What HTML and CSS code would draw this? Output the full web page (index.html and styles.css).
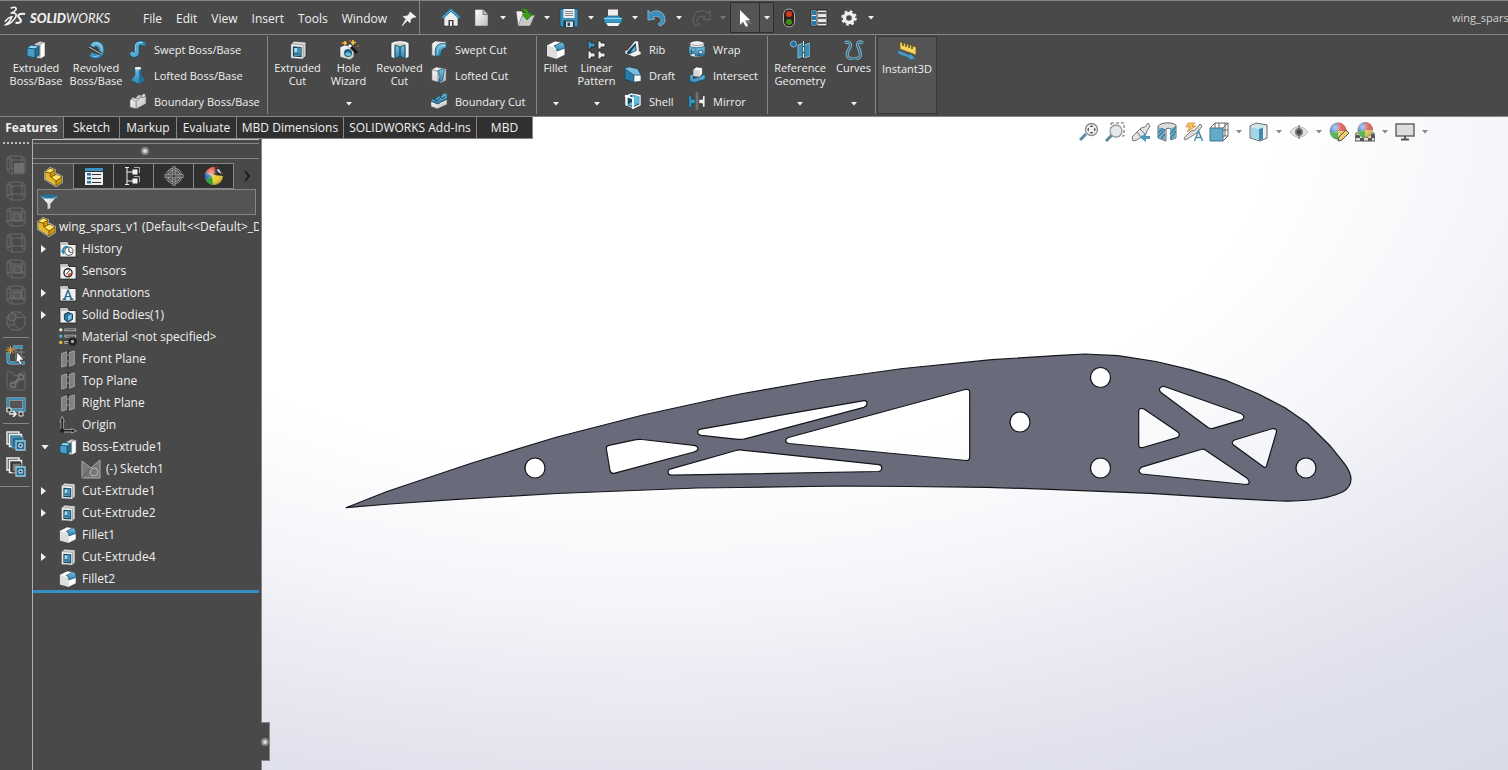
FILE: index.html
```html
<!DOCTYPE html>
<html lang="en">
<head>
<meta charset="utf-8">
<title>SOLIDWORKS</title>
<link rel="stylesheet" href="styles.css">
</head>
<body>
<svg class="sprite" aria-hidden="true">
  <defs>
    <linearGradient id="blue" x1="0" y1="0" x2="0" y2="1"><stop offset="0" stop-color="#7cc1e0"/><stop offset="1" stop-color="#2b80ac"/></linearGradient>
    <linearGradient id="grey" x1="0" y1="0" x2="1" y2="1"><stop offset="0" stop-color="#fff"/><stop offset="1" stop-color="#bdbdbd"/></linearGradient>
    <radialGradient id="shine" cx=".35" cy=".3" r=".8"><stop offset="0" stop-color="#fff" stop-opacity=".6"/><stop offset=".5" stop-color="#fff" stop-opacity="0"/><stop offset="1" stop-color="#000" stop-opacity=".35"/></radialGradient>
  </defs>
  <symbol id="caret" viewBox="0 0 6 4"><path d="M0 0h6L3 3.5z" fill="currentColor"/></symbol>
  <symbol id="extrude" viewBox="0 0 20 20"><path d="M8 4l6-3 5 1v14l-5 3-4-1z" fill="#cfcfcf" stroke="#333" stroke-width=".7"/><path d="M14 4l5-2v14l-5 3z" fill="#fff" stroke="#555" stroke-width=".6"/><path d="M1 8l4-3 8 1-4 3z" fill="#9ad6ee"/><path d="M1 8l8 1v9l-8-2z" fill="#4a9fc6"/><path d="M9 9l4-3v9l-4 3z" fill="#256f96"/><path d="M1 8l4-3 8 1v9l-4 3-8-2zM1 8l8 1v9M9 9l4-3" fill="none" stroke="#164c68" stroke-width=".9"/></symbol>
  <symbol id="revolve" viewBox="0 0 20 20"><path d="M4 5C8-1 18 1 18 10c0 9-9 11-15 6l3-4c4 3 7 1 7-2 0-4-4-5-6-2z" fill="url(#blue)" stroke="#1b617f" stroke-width=".8"/><path d="M7 3c7-1 9 3 9 7s-4 8-10 6" fill="none" stroke="#9bdcf3" stroke-width=".8"/><path d="M3 7l12 7" stroke="#302d2b" stroke-width="3.400"/><path d="M3 7l12 7" stroke="#aaa" stroke-width="1.400"/></symbol>
  <symbol id="sweep" viewBox="0 0 20 20"><path d="M2 14c3 5 7 3 7-1V7c0-4 5-5 8-2" fill="none" stroke="#164f70" stroke-width="5.500"/><path d="M2 14c3 5 7 3 7-1V7c0-4 5-5 8-2" fill="none" stroke="#4fa9d1" stroke-width="3.800"/><path d="M3 13c2 3 4 2 4-1V7c0-4 4-5 8-4" fill="none" stroke="#a5e0f5"/><ellipse cx="17" cy="4.500" rx="1.500" ry="2.500" fill="#2b7da8"/></symbol>
  <symbol id="loft" viewBox="0 0 20 20"><path d="M6.500 2h7v8l4.500 6-8 4-8-4 4.500-6z" fill="url(#blue)" stroke="#164c68" stroke-width=".8"/><path d="M11 3v17l7-4-4.500-6V3z" fill="#236f98"/><ellipse cx="10" cy="2.500" rx="3.500" ry="1.500" fill="#fff"/></symbol>
  <symbol id="boundary" viewBox="0 0 20 20"><path d="M1 9l3-3 3 1 4-4 3 1 3-3 2 4v8L8 19l-7-2z" fill="url(#grey)" stroke="#444" stroke-width=".7"/><path d="M1 9c3-3 4 2 7 1 4 0 3-6 6-4 3 1 3-2 5-1M8 11v8M4 6c4 0 3 3 6 1 3-1 2-4 5-2" fill="none" stroke="#777"/></symbol>
  <symbol id="cut" viewBox="0 0 20 20"><path d="M3 4l3-3 12 1v14l-3 3-12-1z" fill="#d2d2d2" stroke="#333" stroke-width=".8"/><path d="M3 4l12 1v14L3 18z" fill="#fafafa" stroke="#777" stroke-width=".6"/><path d="M5.500 7l7.500.5v9L5.500 16z" fill="#a9dcee" stroke="#1d455a" stroke-width="1.300"/><path d="M9 7.500l3.500.2v5L9 12z" fill="#3d93bb"/><path d="M6 12.500l3-.5 3.500 1v2.500L6 15z" fill="#347c9e"/></symbol>
  <symbol id="wizard" viewBox="0 0 20 20"><path d="M1 7l5-2 9 2v10l-4 3-10-3z" fill="url(#grey)" stroke="#444" stroke-width=".7"/><circle cx="9" cy="13" r="4" fill="#25657f"/><path d="M6 14a4 4 0 006 1c0-3-4-4-6-1" fill="#70c0df"/><path d="M10 5l8 8" stroke="#171717" stroke-width="3"/><path d="M10 5l2 2" stroke="#fff" stroke-width="3"/><path d="M6 1v4M4 3h4M14 0v5M12 2.500h5" stroke="#ffc83d" stroke-width="1.500"/><path d="M2 3h2M10 1h2M18 6h2" stroke="#e4572e" stroke-width="1.500"/></symbol>
  <symbol id="revcut" viewBox="0 0 20 20"><path d="M1 3c4-3 14-3 18 0v14l-4 2V7l-5 2-5-2v12l-4-2z" fill="#f2f2f2" stroke="#333" stroke-width=".7"/><path d="M4 4.500c3-2 9-2 12 0l-2 3H6z" fill="#cfcfcf"/><path d="M5 5l5 2v9l-5 3zM15 5l-5 2v9l5 3z" fill="url(#blue)" stroke="#164c68" stroke-width=".9"/></symbol>
  <symbol id="sweptcut" viewBox="0 0 20 20"><path d="M2 4l4-3 12 1v3L8 8v11l-6-2z" fill="url(#grey)" stroke="#444" stroke-width=".7"/><path d="M6 18V10C7 5 12 3 18 4v5c-4 0-6 2-6 9z" fill="url(#blue)" stroke="#164c68" stroke-width=".8"/><path d="M8 17c0-7 2-11 9-11" fill="none" stroke="#9bdcf3"/></symbol>
  <symbol id="loftcut" viewBox="0 0 20 20"><path d="M2 4l5-3 11 2v13l-6 3-10-3z" fill="url(#grey)" stroke="#444" stroke-width=".7"/><path d="M2 4l7 2v12" fill="none" stroke="#888"/><path d="M9 5l5-2 2 1-2 12-5 3 2-7z" fill="url(#blue)" stroke="#164c68" stroke-width=".8"/></symbol>
  <symbol id="boundcut" viewBox="0 0 20 20"><path d="M1 10l7 3 11-5v6L8 19l-7-3z" fill="url(#grey)" stroke="#444" stroke-width=".7"/><path d="M1 10c1-5 4 0 6-3 3-5 5 0 7-4 1-2 3-1 5-1v6c-3-1-3 2-5 2-3 0-3 4-6 3z" fill="url(#blue)" stroke="#164c68" stroke-width=".8"/><path d="M4 8l4 2 3-4 4 1 2-3" stroke="#153f55" fill="none"/></symbol>
  <symbol id="fillet" viewBox="0 0 20 20"><path d="M1 5l8-4 6 1 4 5v8l-8 4-10-3z" fill="#fff" stroke="#333" stroke-width=".7"/><path d="M1 5l7 3c3 1 3 3 3 5v6L1 16z" fill="#dedede"/><path d="M8 6l8-4c2 1 3 3 3 6l-8 3c0-2-1-4-3-5z" fill="url(#blue)" stroke="#164c68" stroke-width=".8"/></symbol>
  <symbol id="pattern" viewBox="0 0 20 20"><path d="M1 1h3v2h4v4H4v2H1z" fill="#3598c7"/><path d="M11 1h3v2h4v4h-4v2h-3zM1 11h3v2h4v4H4v2H1zM11 11h3v2h4v4h-4v2h-3z" fill="#eee"/><path d="M1 1h3v2h4v4H4v2H1zM11 1h3v2h4v4h-4v2h-3zM1 11h3v2h4v4H4v2H1zM11 11h3v2h4v4h-4v2h-3z" fill="none" stroke="#292929" stroke-width=".9"/></symbol>
  <symbol id="rib" viewBox="0 0 20 20"><path d="M12 1h4l1 11 2 2v2l-8 3L1 15v-3l3-1z" fill="#f2f2f2" stroke="#333" stroke-width=".7"/><path d="M13 3l1 9-9 4-2-2z" fill="#123d54"/><path d="M12.500 6l.5 6-6 2z" fill="#60b7d9"/></symbol>
  <symbol id="draft" viewBox="0 0 20 20"><path d="M1 2l5-1 9 2 4 7-8 1-10-5z" fill="#78c2e0"/><path d="M1 3l10 7v8L1 15z" fill="#287ba4"/><path d="M11 10h8v7l-8 1z" fill="#f4f4f4"/><path d="M1 2l5-1 9 2 4 7v7l-8 1-10-3zM1 3l10 7h8M11 10v8" fill="none" stroke="#183f54" stroke-width=".8"/></symbol>
  <symbol id="shell" viewBox="0 0 20 20"><path d="M1 4l7-3 11 2v12l-8 4-10-4z" fill="#fff" stroke="#333" stroke-width=".8"/><path d="M4 5l5-2 8 2v9l-7 3-6-2z" fill="#174c67"/><path d="M9 3v8l8 2V5zM4 14l5-3 7 2-6 3z" fill="#62b9dc"/><path d="M1 4l9 3v12" fill="none" stroke="#fff" stroke-width="2"/></symbol>
  <symbol id="wrap" viewBox="0 0 20 20"><path d="M2 3c4-3 12-3 16 0v14c-4 3-12 3-16 0z" fill="#eee" stroke="#333" stroke-width=".8"/><path d="M2 4c4 3 12 3 16 0" fill="none" stroke="#999"/><path d="M1 7c5 2 12 2 18 0v9c-2 1-4 2-7 2v-3h4v-3h-4v6H8v-3H4v-3h4v-2H4v6l-3-1z" fill="url(#blue)" stroke="#174c67" stroke-width=".7"/></symbol>
  <symbol id="intersect" viewBox="0 0 20 20"><path d="M2 10l4-1v5l7-2 6-3v6l-7 2-5 2-5-2z" fill="url(#blue)" stroke="#174c67"/><path d="M6 4l3-3 7 1v7l-3 3-7-1z" fill="#fff" stroke="#333" stroke-width=".7"/><path d="M6 4l7 1v7l-7-1z" fill="#d8d8d8"/></symbol>
  <symbol id="mirror" viewBox="0 0 20 20"><path d="M1 4h3v4h4v5H4v4H1z" fill="#3896c2" stroke="#174c67"/><path d="M19 4h-3v4h-4v5h4v4h3z" fill="#f3f3f3" stroke="#333"/><path d="M10 0v20" stroke="#bbb" stroke-width="2.500"/><path d="M10 0v20" stroke="#171717"/></symbol>
  <symbol id="refgeo" viewBox="0 0 20 20"><circle cx="3.500" cy="4" r="3" fill="#266f98" stroke="#7abbd7"/><path d="M8 5l5-2v13l-5 2zM14 5l6-2v13l-6 2z" fill="#3e8eb4" stroke="#81bdd5"/><path d="M13.500 1v18" stroke="#222" stroke-width="2"/><path d="M13.500 1v18" stroke="#d9edf5" stroke-dasharray="5 1"/></symbol>
  <symbol id="curves" viewBox="0 0 20 20"><path d="M1 3c5-3 7 2 4 6-4 7-1 10 5 10s8-3 5-10c-3-5-1-9 4-6" fill="none" stroke="#8eafbd" stroke-width="3.200"/><path d="M1 3c5-3 7 2 4 6-4 7-1 10 5 10s8-3 5-10c-3-5-1-9 4-6" fill="none" stroke="#286e91" stroke-width="1.300"/></symbol>
  <symbol id="instant" viewBox="0 0 20 20"><path d="M3 1l16 5v8L3 8z" fill="#f5d35e" stroke="#705917" stroke-width=".7"/><path d="M6 2v3M9 3v3M12 4v3M15 5v3" stroke="#302b1a" stroke-width="1.200"/><path d="M1 9l12 5v-2l6 6-8 1 1-2L1 13z" fill="#5298bf" stroke="#235879" stroke-width=".7"/></symbol>
  <symbol id="home" viewBox="0 0 20 20"><path d="M3 9l7-6 7 6v9H3z" fill="#eee" stroke="#333" stroke-width=".6"/><path d="M1 10l9-8 9 8" stroke="#297da6" stroke-width="2.600" fill="none"/><path d="M2 9l8-7 8 7" stroke="#76c3e5" stroke-width=".8" fill="none"/><path d="M7.500 18v-6h5v6" fill="#3b3b3b"/><path d="M9 18v-5h2v5" fill="#eee"/></symbol>
  <symbol id="new" viewBox="0 0 20 20"><path d="M4 1.500h8l5 5V18H4z" fill="url(#grey)" stroke="#555" stroke-width=".5"/><path d="M12 1.500v5h5" fill="#bbb" stroke="#777"/></symbol>
  <symbol id="open" viewBox="0 0 20 20"><path d="M1 3h6l1 2h7v13H3z" fill="#f0f0f0" stroke="#444" stroke-width=".6"/><path d="M7 8l13-1-5 11H3z" fill="#c9c9c9" stroke="#555" stroke-width=".5"/><path d="M6 1c5-1 8 1 8 5h4l-6 6-5-6h4c0-2-2-4-5-4z" fill="#3fa014" stroke="#176506" stroke-width=".5"/></symbol>
  <symbol id="save" viewBox="0 0 20 20"><path d="M1 1h18v18H3l-2-2z" fill="#3c91b8" stroke="#16455d" stroke-width=".8"/><path d="M4.500 1h11v9h-11z" fill="#eee"/><path d="M6 3.500h8M6 5.500h8M6 7.500h8" stroke="#888"/><path d="M4.500 12.500h11V19h-11z" fill="#173e51"/><path d="M7 13.500h7V19H7z" fill="#ddd"/><path d="M8.500 14.500H11V18H8.500z" fill="#174a65"/></symbol>
  <symbol id="print" viewBox="0 0 20 20"><path d="M5 1.500h10V11H5z" fill="#eee"/><path d="M1 10l3-2h12l3 2v5H1z" fill="#3b9bc6" stroke="#174a63" stroke-width=".7"/><path d="M1 10.500h18" stroke="#93daf4"/><path d="M3 15h14l-2 3H5z" fill="#f3f3f3"/></symbol>
  <symbol id="undo" viewBox="0 0 20 20"><path d="M1 2l2 3c7-5 15-1 15 7 0 3-2 5-5 6l-2-2c4-2 4-5 1-7-2-1-4-1-6 0l2 2-7 1z" fill="#368fbc" stroke="#95b6c4" stroke-width=".9"/></symbol>
  <symbol id="redo" viewBox="0 0 20 20"><path d="M19 2l-2 3C10 0 2 4 2 12c0 3 2 5 5 6l2-2c-4-2-4-5-1-7 2-1 4-1 6 0l-2 2 7 1z" fill="none" stroke="#696969"/></symbol>
  <symbol id="cursor" viewBox="0 0 20 20"><path d="M7 4l10 12-5-1 2 5-3-1-2-5-2 3z" fill="#888" opacity=".7"/><path d="M5 2l10 10-5 .5 3 5-2.500 1-2.500-5L5 17z" fill="#fff"/></symbol>
  <symbol id="lights" viewBox="0 0 20 20"><rect x="4.500" y="1" width="11" height="18" rx="5.500" fill="#2c2020" stroke="#b0b0b0"/><circle cx="10" cy="6" r="3" fill="#d8391e"/><circle cx="10" cy="14" r="3" fill="#3f8d16"/></symbol>
  <symbol id="options" viewBox="0 0 20 20"><path d="M2 2h16v16H2z" fill="#e7e7e7" stroke="#222"/><path d="M8 2v16" stroke="#222"/><path d="M3 3h4v4H3zM3 8h4v4H3zM3 13h4v4H3z" fill="#247cac"/><path d="M9 5h8M9 10h8M9 15h8" stroke="#333" stroke-width="1.500"/></symbol>
  <symbol id="gear" viewBox="0 0 20 20"><circle cx="10" cy="10" r="4.500" fill="none" stroke="#eee" stroke-width="3.400"/><circle cx="10" cy="10" r="6.500" fill="none" stroke="#eee" stroke-width="2.600" stroke-dasharray="2.600 2.500"/></symbol>
  <symbol id="pin" viewBox="0 0 16 16"><path d="M9 1l6 5-3 .5-2.500 2L9 12 6.500 9.500 1 15l4-7-3-2.500 4-.5 2-1.500z" fill="#f2f2f2" stroke="#f2f2f2" stroke-width=".6"/></symbol>
  <symbol id="part" viewBox="0 0 20 20"><path d="M2 5l5-4 5 2v5l2-1 5 3v5l-6 4L2 12z" fill="#e8b524" stroke="#f5f5f5" stroke-width="1.600" stroke-linejoin="round"/><path d="M2 5l5-4 5 2-5 3zM8 10l4-2 7 2-6 4z" fill="#ffe26a"/><path d="M13 14l6-4v5l-6 4zM7 6l5-3v5l-4 2z" fill="#cf9a10"/><path d="M2 5l5-4 5 2v5l2-1 5 3v5l-6 4L2 12zM2 5l5 1 5-3M7 6l1 4 5 4v5M8 10l4-2M13 14l6-4" fill="none" stroke="#6b5200" stroke-width=".9" stroke-linejoin="round"/></symbol>
  <symbol id="props" viewBox="0 0 20 20"><path d="M1 2h18v17H1z" fill="#eee"/><path d="M1 2h18v3H1z" fill="#3c94be"/><path d="M3 7h4v2.500H3zM3 11h4v2.500H3zM3 15h4v2.500H3z" fill="#2d749b"/><path d="M8 8.500h9M8 12.500h9M8 16.500h9M1 5.500h18" stroke="#333"/></symbol>
  <symbol id="config" viewBox="0 0 20 20"><path d="M3 1.500v17M3 6h6M3 15h6M1 1.500h4M1 18.500h4" fill="none" stroke="#eee"/><path d="M8.500 3.500h5v5h-5zM8.500 12.500h5v5h-5z" fill="#f3f3f3"/><path d="M10 1.500h5.500V7M10 10.500h5.500V16" stroke="#aaa" fill="none"/></symbol>
  <symbol id="target" viewBox="0 0 20 20"><circle cx="10" cy="10" r="7" fill="#5a5a5a" stroke="#aaa" stroke-width="2.500"/><circle cx="10" cy="10" r="7" fill="none" stroke="#222"/><path d="M10 0v20M0 10h20" stroke="#aaa" stroke-width="3"/><path d="M10 0v20M0 10h20" stroke="#222"/></symbol>
  <symbol id="ball" viewBox="0 0 20 20"><circle cx="10" cy="10" r="9" fill="#efcb30"/><path d="M10 9L2 6a9 9 0 0110-5z" fill="#e23429"/><path d="M8 10L2 6a9 9 0 000 8z" fill="#2864cf"/><path d="M8 10l-6 4a9 9 0 007 5z" fill="#25a034"/><path d="M10 9L11 1a9 9 0 018 9z" fill="#222"/><path d="M13 3c2 0 4 2 4 5-2-1-4-3-4-5z" fill="#ddd"/><circle cx="10" cy="10" r="9" fill="url(#shine)"/></symbol>
  <symbol id="funnel" viewBox="0 0 20 20"><path d="M2 5l6 7v7l4-2v-5l6-7z" fill="url(#grey)" stroke="#333" stroke-width=".6"/><ellipse cx="10" cy="4" rx="9" ry="2.500" fill="#286f94"/><path d="M1 4c3 3 15 3 18 0" fill="none" stroke="#7fc8e7"/></symbol>
  <symbol id="folder" viewBox="0 0 20 20"><path d="M1 2h9l1 3h8v14H1z" fill="#efefef" stroke="#262626"/><path d="M1.500 2.500h8l1 3h-9z" fill="#c4c4c4"/></symbol>
  <symbol id="history" viewBox="0 0 20 20"><use href="#folder"/><circle cx="11" cy="12.500" r="4.500" fill="#fff" stroke="#444"/><path d="M11 9v4l3 1" fill="none" stroke="#222"/><path d="M4 13c0-3 2-6 6-5" fill="none" stroke="#2a83b0" stroke-width="2"/><path d="M2 12h5l-2 4z" fill="#2a83b0"/></symbol>
  <symbol id="sensors" viewBox="0 0 20 20"><use href="#folder"/><circle cx="10" cy="12" r="4.500" fill="#fff" stroke="#222" stroke-width="1.500"/><path d="M10 13l4-1-1 3-3 1z" fill="#df4e31"/><path d="M8 14l4-5" stroke="#222"/></symbol>
  <symbol id="notes" viewBox="0 0 20 20"><use href="#folder"/><path d="M6 17l4-10 4 10M7.500 14h5M4 17h4M12 17h4" fill="none" stroke="#276b8f" stroke-width="1.600"/></symbol>
  <symbol id="bodies" viewBox="0 0 20 20"><use href="#folder"/><path d="M6 9l4-2 5 2v6l-5 3-4-3z" fill="#2b7499" stroke="#12394d"/><path d="M10 11l4-2v5l-4 2z" fill="#7dc9e7"/></symbol>
  <symbol id="material" viewBox="0 0 20 20"><path d="M6 2h13M6 9h13M6 16h6" stroke="#bbb" stroke-width="3"/><path d="M7 2h11M7 9h11M7 16h5" stroke="#333"/><circle cx="2" cy="2" r="1.800" fill="#eee"/><circle cx="2" cy="9" r="1.800" fill="#59b6dc"/><circle cx="2" cy="16" r="1.800" fill="#eac02b"/><circle cx="15" cy="15" r="3" fill="#aaa" stroke="#222" stroke-width="2.200"/><circle cx="15" cy="15" r="4.500" fill="none" stroke="#222" stroke-width="1.600" stroke-dasharray="2 1.500"/></symbol>
  <symbol id="plane" viewBox="0 0 20 20"><path d="M3 4l6-2v15l-6 2zM11 3l6-2v15l-6 2z" fill="#808080" stroke="#aaa"/><path d="M10 0v20" stroke="#282828" stroke-width="1.500" stroke-dasharray="5 1.500"/></symbol>
  <symbol id="origin" viewBox="0 0 20 20"><path d="M3.500 4v12.500H16" fill="none" stroke="#aaa" stroke-width="3.500"/><path d="M1 6l2.500-5.500L6 6zM14 14l5.500 2.500L14 19z" fill="#222" stroke="#aaa"/><path d="M3.500 4v12.500H16" fill="none" stroke="#202020" stroke-width="1.700"/><circle cx="3.500" cy="16.500" r="2.500" fill="#222"/></symbol>
  <symbol id="sketch" viewBox="0 0 20 20"><path d="M1 2l9 7 9-8v18H1z" fill="#777" stroke="#aaa"/><circle cx="13" cy="13" r="4" fill="none" stroke="#b5b5b5"/><path d="M1 19L10 9" stroke="#5a5a5a"/></symbol>
  <symbol id="cube" viewBox="0 0 20 20"><path d="M1 3l3-2h12l3 4v12l-3 2H5l-4-4zM1 3l5 2h13M6 5v14M1 15l5-2h13M16 1v13l3 3M4 1v12l-3 2" fill="none" stroke="#6a6a6a"/></symbol>
  <symbol id="cubefront" viewBox="0 0 20 20"><use href="#cube"/><path d="M8 8h10v10H8z" fill="#6f6f6f"/></symbol>
  <symbol id="cubein" viewBox="0 0 20 20"><use href="#cube"/><path d="M8 7h7v7H8z" fill="#565656" stroke="#747474"/></symbol>
  <symbol id="cubeiso" viewBox="0 0 20 20"><path d="M6 1h8l5 5v8l-5 5H6l-5-5V6zM1 6l7 1 6-6M8 7l11-1M8 7v7l6 5M8 14l-7 0" fill="none" stroke="#6c6c6c"/><circle cx="6" cy="6" r="4" fill="#555" stroke="#6c6c6c"/></symbol>
  <symbol id="newsketch" viewBox="0 0 20 20"><path d="M9 7h10M9 12h10M10 3v14M15 3v14" fill="none" stroke="#858585"/><path d="M17 2H7M2 7v8c0 2 1 3 3 3h14" fill="none" stroke="#92c9df" stroke-width="3"/><path d="M17 2H7M2 7v8c0 2 1 3 3 3h14" fill="none" stroke="#267ba2" stroke-width="1.500"/><path d="M4.500 1v8M0 5h9M1.500 2l6 6M7.500 2l-6 6" stroke="#f0a33b"/><path d="M11 7l7 8h-4l2 4-2 1-2-4-2 2z" fill="#fff" stroke="#333" stroke-width=".7"/></symbol>
  <symbol id="sketchfix" viewBox="0 0 20 20"><path d="M1 1h5l3 4 8-4h2v18H4l-3-3z" fill="none" stroke="#696969"/><circle cx="15" cy="6" r="2.500" fill="none" stroke="#707070" stroke-width="2"/><circle cx="7" cy="14" r="2.500" fill="none" stroke="#707070" stroke-width="2"/><path d="M9 12l4-4" stroke="#707070" stroke-width="3"/></symbol>
  <symbol id="viewmove" viewBox="0 0 20 20"><path d="M2 2h16v11H2z" fill="#555" stroke="#a7d2e4" stroke-width="3"/><path d="M2 2h16v11H2z" fill="none" stroke="#267ca6" stroke-width="1.700"/><path d="M1 11h4v4H1zM13 15h4v4h-4z" fill="#333" stroke="#eee"/><path d="M3 17h6M7 14l3 3-3 3" fill="none" stroke="#eee" stroke-width="1.600"/></symbol>
  <symbol id="stack" viewBox="0 0 20 20"><path d="M1 1h12v12H1z" fill="#666" stroke="#eee" stroke-width="1.400"/><path d="M3.500 3.500h12v12h-12z" fill="#3c7a99" stroke="#f2f2f2" stroke-width="1.400"/><path d="M6 6h11v11H6z" fill="#2b6c8d" stroke="#5aa0c0"/><path d="M10 10h9v9h-9z" fill="#246c92" stroke="#9ccde2" stroke-width="1.300"/><path d="M13 13h3v3h-3z" fill="#112" stroke="#fff"/></symbol>
  <symbol id="stackline" viewBox="0 0 20 20"><path d="M1 1h12v12H1z" fill="#555" stroke="#eee" stroke-width="1.400"/><path d="M3.500 3.500h12v12h-12z" fill="#444" stroke="#f2f2f2" stroke-width="1.400"/><path d="M6 6h9v9H6z" fill="#777" stroke="#222"/><path d="M10 10h9v9h-9z" fill="#246c92" stroke="#9ccde2" stroke-width="1.300"/><path d="M13 13h3v3h-3z" fill="#112" stroke="#fff"/></symbol>
  <symbol id="zoomfit" viewBox="0 0 20 20"><path d="M1 18l6-6" stroke="#5c8ba0" stroke-width="3"/><circle cx="12.500" cy="7.500" r="6" fill="#f2f2f2" stroke="#8b8b8b" stroke-width="1.300"/><path d="M12.500 3l2 2h-4zM12.500 12l2-2h-4zM8 7.500l2-2v4zM17 7.500l-2-2v4z" fill="#555"/></symbol>
  <symbol id="zoomarea" viewBox="0 0 20 20"><path d="M6 1h13v13H6z" fill="none" stroke="#666" stroke-dasharray="3 2"/><path d="M1 19l6-6" stroke="#5c8ba0" stroke-width="3"/><circle cx="11" cy="9" r="6" fill="#e4e8ea" stroke="#999" stroke-width="1.300"/></symbol>
  <symbol id="prev" viewBox="0 0 20 20"><path d="M1 15l9-9 4-1 3-4 2 3-3 5-1 3-9 6-4 1z" fill="#e2e2e2" stroke="#777"/><path d="M9 7l5 5M6 10l4 5" stroke="#777"/><path d="M19 14h-4v-3l-6 4.500 6 4.500v-3h4z" fill="#4f98ba"/></symbol>
  <symbol id="section" viewBox="0 0 20 20"><path d="M1 4c4-4 14-4 18-1v13l-5 2V7c-2-1-4-1-5 0v12l-8-3z" fill="#ddd" stroke="#666"/><path d="M1 5l7 2v11l-7-2zM13 7l6-3v12l-6 2z" fill="#6aaac6"/><path d="M1 11l5-5M1 15l7-8M4 17l4-5M13 12l6-7M13 17l6-8" stroke="#315f75"/></symbol>
  <symbol id="annview" viewBox="0 0 20 20"><path d="M1 16l7-7 4-1 5-6 2 2-4 6-9 6-4 2z" fill="#ddd" stroke="#777"/><path d="M5 1h7L9 4h4L4 10l3-5H3z" fill="#f7c656" stroke="#c87a43" stroke-width=".7"/><path d="M11.500 19l4-10 4 10M13 15.500h5" fill="none" stroke="#4c8dad" stroke-width="1.500"/></symbol>
  <symbol id="orient" viewBox="0 0 20 20"><path d="M6 1h13v13H6zM1 6l5-5M14 6l5-5M14 19l5-5M10 1v13M14 8h5M16 1v13" fill="none" stroke="#666"/><path d="M1 6h13v13H1z" fill="#62abcb" stroke="#44738a"/></symbol>
  <symbol id="shaded" viewBox="0 0 20 20"><path d="M1 4l6-3 11 2v13l-7 3-10-3z" fill="#eee" stroke="#666"/><path d="M2 5l8 2v11l-8-2z" fill="#a4d4e7"/><path d="M10 7l4-2v12l-4 2z" fill="#3e8baf"/><path d="M2 4l5-2 10 2-7 3z" fill="#cce4ee"/></symbol>
  <symbol id="eye" viewBox="0 0 20 20"><path d="M1 10c5-7 13-7 18 0-5 7-13 7-18 0z" fill="#e4e4e4" stroke="#bbb"/><circle cx="10" cy="10" r="4" fill="#777"/><circle cx="10" cy="10" r="2" fill="#333"/><path d="M10 3v14" stroke="#555"/></symbol>
  <symbol id="appear" viewBox="0 0 20 20"><circle cx="9" cy="9" r="8.500" fill="#e6cc68"/><path d="M9 9L1 11A8.500 8.500 0 019 .5z" fill="#5785cb"/><path d="M9 9V.5A8.500 8.500 0 0117.500 9z" fill="#db6462"/><path d="M9 9L1 11c1 4 4 6.500 8 6.500z" fill="#4eb553"/><circle cx="9" cy="9" r="8.500" fill="url(#shine)"/><path d="M9 19l1-4 7-7 3 3-7 7z" fill="#edcf72" stroke="#555"/></symbol>
  <symbol id="scene" viewBox="0 0 20 20"><path d="M1 11h18l1 8H0z" fill="#ddd" stroke="#555"/><path d="M1 13h4v3H1zM5 16h4v3H5zM9 13h4v3H9zM13 16h4v3h-4zM16 12h3v4h-3z" fill="#555"/><circle cx="10" cy="8" r="7.800" fill="#e4c65d"/><path d="M10 8L3 10A8 8 0 0110 0z" fill="#5785cb"/><path d="M10 8V0a8 8 0 018 8z" fill="#dc6663"/><path d="M10 8l-7 2a8 8 0 007 6z" fill="#4eb553"/><circle cx="10" cy="8" r="7.800" fill="url(#shine)"/></symbol>
  <symbol id="monitor" viewBox="0 0 20 20"><path d="M1 2h18v12H1z" fill="#ddd" stroke="#666" stroke-width="1.500"/><path d="M10 14v3M6 17.500h8" stroke="#555" stroke-width="2"/></symbol>
</svg>

<header class="titlebar">
  <div class="brand">
    <svg class="brand-mark" viewBox="0 0 24 22" aria-hidden="true"><path d="M7 3c4-2 7-1 5 2-1 2-3 2-5 3 6-1 7 2 4 6s-6 6-9 6c4-3 6-6 6-9M1 17c2-3 4-5 8-5" fill="none" stroke="#f4f4f4" stroke-width="1.700"/><path d="M22 9c-6-1-9 1-6 4 3 3 2 6-4 5" fill="none" stroke="#f4f4f4" stroke-width="2.200"/></svg>
    <span class="brand-name"><b>SOLID</b>WORKS</span>
  </div>
  <nav class="menu" aria-label="Main menu">
    <button>File</button><button>Edit</button><button>View</button><button>Insert</button><button>Tools</button><button>Window</button>
    <button aria-label="Pin menu"><svg class="i16"><use href="#pin"/></svg></button>
  </nav>
  <div class="quick">
    <button class="q" aria-label="Home"><svg class="i20"><use href="#home"/></svg></button>
    <button class="q" aria-label="New"><svg class="i20"><use href="#new"/></svg></button><button class="qc" aria-label="New options"><svg class="caret"><use href="#caret"/></svg></button>
    <button class="q" aria-label="Open"><svg class="i20"><use href="#open"/></svg></button><button class="qc" aria-label="Open options"><svg class="caret"><use href="#caret"/></svg></button>
    <button class="q" aria-label="Save"><svg class="i20"><use href="#save"/></svg></button><button class="qc" aria-label="Save options"><svg class="caret"><use href="#caret"/></svg></button>
    <button class="q" aria-label="Print"><svg class="i20"><use href="#print"/></svg></button><button class="qc" aria-label="Print options"><svg class="caret"><use href="#caret"/></svg></button>
    <button class="q" aria-label="Undo"><svg class="i20"><use href="#undo"/></svg></button><button class="qc" aria-label="Undo options"><svg class="caret"><use href="#caret"/></svg></button>
    <button class="q" aria-label="Redo" disabled><svg class="i20"><use href="#redo"/></svg></button><button class="qc" aria-label="Redo options" disabled><svg class="caret"><use href="#caret"/></svg></button>
    <span class="select-tool"><button class="q" aria-label="Select"><svg class="i20"><use href="#cursor"/></svg></button><button class="qc" aria-label="Select options"><svg class="caret"><use href="#caret"/></svg></button></span>
    <button class="q" aria-label="Rebuild"><svg class="i20"><use href="#lights"/></svg></button>
    <button class="q" aria-label="File properties"><svg class="i20"><use href="#options"/></svg></button>
    <button class="q" aria-label="Options"><svg class="i20"><use href="#gear"/></svg></button><button class="qc" aria-label="Options menu"><svg class="caret"><use href="#caret"/></svg></button>
  </div>
  <span class="doc-title">wing_spars</span>
</header>

<section class="ribbon" aria-label="Features">
  <div class="group first">
    <button class="big w60"><svg class="i20"><use href="#extrude"/></svg><span>Extruded Boss/Base</span></button>
    <button class="big w60"><svg class="i20"><use href="#revolve"/></svg><span>Revolved Boss/Base</span></button>
    <div class="list boss">
      <button><svg class="i18"><use href="#sweep"/></svg>Swept Boss/Base</button>
      <button><svg class="i18"><use href="#loft"/></svg>Lofted Boss/Base</button>
      <button><svg class="i18"><use href="#boundary"/></svg>Boundary Boss/Base</button>
    </div>
  </div>
  <div class="group cuts">
    <button class="big w51"><svg class="i20"><use href="#cut"/></svg><span>Extruded Cut</span></button>
    <button class="big w51"><svg class="i20"><use href="#wizard"/></svg><span>Hole Wizard</span><svg class="caret"><use href="#caret"/></svg></button>
    <button class="big w51"><svg class="i20"><use href="#revcut"/></svg><span>Revolved Cut</span></button>
    <div class="list cutlist">
      <button><svg class="i18"><use href="#sweptcut"/></svg>Swept Cut</button>
      <button><svg class="i18"><use href="#loftcut"/></svg>Lofted Cut</button>
      <button><svg class="i18"><use href="#boundcut"/></svg>Boundary Cut</button>
    </div>
  </div>
  <div class="group">
    <button class="big w37"><svg class="i20"><use href="#fillet"/></svg><span>Fillet</span><svg class="caret"><use href="#caret"/></svg></button>
    <button class="big w45"><svg class="i20"><use href="#pattern"/></svg><span>Linear Pattern</span><svg class="caret"><use href="#caret"/></svg></button>
    <div class="list rib">
      <button><svg class="i18"><use href="#rib"/></svg>Rib</button>
      <button><svg class="i18"><use href="#draft"/></svg>Draft</button>
      <button><svg class="i18"><use href="#shell"/></svg>Shell</button>
    </div>
    <div class="list wrap">
      <button><svg class="i18"><use href="#wrap"/></svg>Wrap</button>
      <button><svg class="i18"><use href="#intersect"/></svg>Intersect</button>
      <button><svg class="i18"><use href="#mirror"/></svg>Mirror</button>
    </div>
  </div>
  <div class="group">
    <button class="big w64"><svg class="i20"><use href="#refgeo"/></svg><span>Reference Geometry</span><svg class="caret"><use href="#caret"/></svg></button>
    <button class="big w43"><svg class="i20"><use href="#curves"/></svg><span>Curves</span><svg class="caret"><use href="#caret"/></svg></button>
  </div>
  <button class="big w60 active" aria-pressed="true"><svg class="i20"><use href="#instant"/></svg><span>Instant3D</span></button>
</section>

<main class="workspace">
  <div class="tabs" role="tablist">
    <button class="w64 on" role="tab" aria-selected="true">Features</button><button class="w56" role="tab">Sketch</button><button class="w57" role="tab">Markup</button><button class="w60" role="tab">Evaluate</button><button class="w107" role="tab">MBD Dimensions</button><button class="w133" role="tab">SOLIDWORKS Add-Ins</button><button class="w56" role="tab">MBD</button>
  </div>

  <div class="hud">
    <button aria-label="Zoom to fit"><svg class="i20"><use href="#zoomfit"/></svg></button>
    <button aria-label="Zoom to area"><svg class="i20"><use href="#zoomarea"/></svg></button>
    <button aria-label="Previous view"><svg class="i20"><use href="#prev"/></svg></button>
    <button aria-label="Section view"><svg class="i20"><use href="#section"/></svg></button>
    <button aria-label="Annotation views"><svg class="i20"><use href="#annview"/></svg></button>
    <button class="drop" aria-label="View orientation"><svg class="i20"><use href="#orient"/></svg><svg class="caret"><use href="#caret"/></svg></button>
    <button class="drop" aria-label="Display style"><svg class="i20"><use href="#shaded"/></svg><svg class="caret"><use href="#caret"/></svg></button>
    <button class="drop" aria-label="Hide or show items"><svg class="i20"><use href="#eye"/></svg><svg class="caret"><use href="#caret"/></svg></button>
    <button aria-label="Edit appearance"><svg class="i20"><use href="#appear"/></svg></button>
    <button class="drop" aria-label="Apply scene"><svg class="i20"><use href="#scene"/></svg><svg class="caret"><use href="#caret"/></svg></button>
    <button class="drop" aria-label="View settings"><svg class="i20"><use href="#monitor"/></svg><svg class="caret"><use href="#caret"/></svg></button>
  </div>

  <div class="body">
    <aside class="strip" aria-label="View tools">
      <span class="grip"></span>
      <button aria-label="Front"><svg class="i20"><use href="#cubefront"/></svg></button>
      <button aria-label="Back"><svg class="i20"><use href="#cube"/></svg></button>
      <button aria-label="Left"><svg class="i20"><use href="#cubein"/></svg></button>
      <button aria-label="Right"><svg class="i20"><use href="#cube"/></svg></button>
      <button aria-label="Top"><svg class="i20"><use href="#cubein"/></svg></button>
      <button aria-label="Bottom"><svg class="i20"><use href="#cubein"/></svg></button>
      <button aria-label="Isometric"><svg class="i20"><use href="#cubeiso"/></svg></button>
      <hr>
      <button aria-label="Sketch"><svg class="i20"><use href="#newsketch"/></svg></button>
      <button aria-label="Repair sketch"><svg class="i20"><use href="#sketchfix"/></svg></button>
      <button aria-label="Move view"><svg class="i20"><use href="#viewmove"/></svg></button>
      <hr>
      <button aria-label="Show bodies"><svg class="i20"><use href="#stack"/></svg></button>
      <button aria-label="Hide bodies"><svg class="i20"><use href="#stackline"/></svg></button>
      <hr class="end">
    </aside>

    <aside class="panel">
      <div class="panel-grip"><span class="dot"></span></div>
      <div class="panel-tabs">
        <button class="on" aria-label="Feature tree"><svg class="i20"><use href="#part"/></svg></button>
        <button aria-label="Properties"><svg class="i20"><use href="#props"/></svg></button>
        <button aria-label="Configurations"><svg class="i20"><use href="#config"/></svg></button>
        <button aria-label="Dimensions"><svg class="i20"><use href="#target"/></svg></button>
        <button aria-label="Display"><svg class="i20"><use href="#ball"/></svg></button>
        <button class="more" aria-label="More"><svg class="i16" viewBox="0 0 16 16"><path d="M6 3l4 5-4 5" fill="none" stroke="#1d1d1d" stroke-width="2"/></svg></button>
      </div>
      <label class="filter"><svg class="i18"><use href="#funnel"/></svg><input type="text" aria-label="Filter tree"></label>
      <div class="root"><svg class="i20"><use href="#part"/></svg><span>wing_spars_v1 (Default&lt;&lt;Default&gt;_Di</span></div>
      <ul class="tree">
        <li><button class="tw" aria-label="Expand"></button><svg class="i18"><use href="#history"/></svg>History</li>
        <li><span class="tw none"></span><svg class="i18"><use href="#sensors"/></svg>Sensors</li>
        <li><button class="tw" aria-label="Expand"></button><svg class="i18"><use href="#notes"/></svg>Annotations</li>
        <li><button class="tw" aria-label="Expand"></button><svg class="i18"><use href="#bodies"/></svg>Solid Bodies(1)</li>
        <li><span class="tw none"></span><svg class="i18"><use href="#material"/></svg>Material &lt;not specified&gt;</li>
        <li><span class="tw none"></span><svg class="i18"><use href="#plane"/></svg>Front Plane</li>
        <li><span class="tw none"></span><svg class="i18"><use href="#plane"/></svg>Top Plane</li>
        <li><span class="tw none"></span><svg class="i18"><use href="#plane"/></svg>Right Plane</li>
        <li><span class="tw none"></span><svg class="i18"><use href="#origin"/></svg>Origin</li>
        <li><button class="tw open" aria-label="Collapse"></button><svg class="i18"><use href="#extrude"/></svg>Boss-Extrude1</li>
        <li class="child"><span class="tw none"></span><svg class="i20"><use href="#sketch"/></svg>(-) Sketch1</li>
        <li><button class="tw" aria-label="Expand"></button><svg class="i18"><use href="#cut"/></svg>Cut-Extrude1</li>
        <li><button class="tw" aria-label="Expand"></button><svg class="i18"><use href="#cut"/></svg>Cut-Extrude2</li>
        <li><span class="tw none"></span><svg class="i18"><use href="#fillet"/></svg>Fillet1</li>
        <li><button class="tw" aria-label="Expand"></button><svg class="i18"><use href="#cut"/></svg>Cut-Extrude4</li>
        <li><span class="tw none"></span><svg class="i18"><use href="#fillet"/></svg>Fillet2</li>
      </ul>
      <div class="rollback"></div>
      <button class="handle" aria-label="Collapse panel"><span class="dot"></span></button>
    </aside>

    <svg class="model" viewBox="262 139 1246 631" role="img" aria-label="Wing spar">
      <path fill="#696b7a" stroke="#15161a" stroke-width="1.200" stroke-linejoin="round" fill-rule="evenodd" d="
        M346 507.700L387 491.500L472 463L557 437L643 415L723 397.500L740 394L820 380L903 368.500L992 359.700L1060 355.300L1085 354L1118 355.700L1156 361.500L1190 369.700L1227 380.700L1258 393.700L1285 407.700L1307 423L1330 445.700L1345 464.300Q1351 473 1351 479Q1351 487 1343 491.700Q1330 498 1310 500Q1295 501.500 1280 501L1230 498.300L1150 493.300L1050 489.300L987 487.300L907 486.500L843 486L740 487.500L697 488L557 493.500L457 499.300L390 504Z
        M609 445.300L636 439.700Q639 439 642 439.500L694 445.300Q698 446 698 449Q697.500 451 694 452L614 473.300Q611 474 610 470.500L606.300 448.500Q606 446 609 445.300Z
        M700.500 429.200L864 400.700Q867 400.500 867 403.500Q867 406 864 407.300L745 438.800Q742 439.800 738 439.300L701 435.300Q697.500 434.500 697.500 432Q698 429.700 700.500 429.200Z
        M671 468.800L736 450.500Q740 449.500 744 450.300L879 464.700Q881.800 465.500 881.800 468Q881.500 471.300 878 471.500L671 475.200Q668 475 668 472Q668 469.800 671 468.800Z
        M788.500 437.500L965 389.500Q969.700 388.700 969.700 392L969.700 457Q969.700 460.800 966 460.500L789 443.500Q785.700 443 785.700 440.300Q786 438.300 788.500 437.500Z
        M1165 386.700L1241.500 413.800Q1246 416.800 1242 419.800L1213 428.300Q1210.500 429 1208 427.500L1161 392.500Q1159 390.500 1159.500 388.700Q1161.500 385.700 1165 386.700Z
        M1144 409L1177.500 431.700Q1181.500 435 1177 437.700L1143 447.500Q1138.700 448.500 1138.700 445L1138.700 411Q1139.500 407 1144 409Z
        M1234.500 440L1272 428.700Q1277 428 1276.500 432L1266.500 466Q1265.500 468.500 1263 466.500L1233.500 445Q1230.500 442 1234.500 440Z
        M1141.500 467.200L1201 449.500Q1203.500 448.500 1206 450.500L1247.500 478.500Q1251.500 484.500 1246 484.500L1141.500 474Q1136.500 471 1141.500 467.200Z
        M525 468a10 10 0 1020 0a10 10 0 10-20 0Z
        M1010 422a10 10 0 1020 0a10 10 0 10-20 0Z
        M1090.500 377.500a10 10 0 1020 0a10 10 0 10-20 0Z
        M1090.500 468a10 10 0 1020 0a10 10 0 10-20 0Z
        M1296 468a10 10 0 1020 0a10 10 0 10-20 0Z"/>
    </svg>
  </div>
</main>
</body>
</html>
```
FILE: styles.css
```css
* { box-sizing: border-box; }
body {
  margin: 0;
  height: 100vh;
  display: flex;
  flex-direction: column;
  overflow: hidden;
  background: #494949;
  color: #f0f0f0;
  font: 12px/16px "Open Sans", "Noto Sans", sans-serif;
}
button { margin: 0; padding: 0; border: 0; background: none; color: inherit; font: inherit; }
svg { display: block; flex: none; }
.sprite { position: absolute; width: 0; height: 0; }
.i20 { width: 20px; height: 20px; }
.i18 { width: 18px; height: 18px; }
.i16 { width: 16px; height: 16px; }
.caret { width: 6px; height: 4px; }

/* Title bar */
.titlebar {
  display: flex;
  align-items: center;
  height: 35px;
  border-top: 1px solid #868686;
  border-bottom: 1px solid #868686;
}
.brand { display: flex; align-items: center; gap: 3px; width: 143px; padding-left: 4px; }
.brand-mark { width: 23px; height: 22px; margin-bottom: 4px; }
.brand-name { font: italic 13px/16px Lato, sans-serif; }
.brand-name b { font-weight: 900; }
.menu { display: flex; align-items: center; gap: 14px; align-self: stretch; width: 277px; padding-top: 2px; border-right: 1px solid #868686; }
.quick { display: flex; align-items: center; align-self: stretch; padding-left: 16px; }
.q, .qc { display: grid; place-items: center; height: 29px; }
.q { width: 30px; }
.qc { width: 14px; }
.qc:disabled { color: #777; }
.select-tool { display: flex; border: 1px solid #303030; background: #545454; }
.select-tool .q { width: 28px; }
.select-tool .qc { border-left: 1px solid #303030; }
.doc-title { width: 56px; margin-left: auto; overflow: hidden; white-space: nowrap; color: #d0d0d0; font-size: 11px; }

/* Command ribbon */
.ribbon {
  display: flex;
  height: 82px;
  padding-top: 1px;
  border-bottom: 1px solid #868686;
  font-size: 11px;
  line-height: 13px;
}
.group { display: flex; height: 78px; border-right: 1px solid #868686; }
.first { padding-left: 6px; }
.cuts { padding-left: 4px; }
.big { display: flex; flex-direction: column; align-items: center; height: 78px; padding-top: 4px; }
.big span { padding-top: 1px; }
.big > .caret { margin: auto 0 8px; }
.active { margin-left: 1px; border: 1px solid #383838; background: #545454; }
.list { display: flex; flex-direction: column; padding-left: 5px; }
.list button { display: flex; align-items: center; gap: 7px; height: 26px; white-space: nowrap; }
.boss { width: 141px; padding-left: 3px; }
.cutlist { width: 111px; }
.rib { width: 64px; }
.wrap { width: 84px; }
.w37 { width: 37px; }
.w43 { width: 43px; }
.w45 { width: 45px; }
.w51 { width: 51px; }
.w56 { width: 56px; }
.w57 { width: 57px; }
.w60 { width: 60px; }
.w64 { width: 64px; }
.w107 { width: 107px; }
.w133 { width: 133px; }

/* Workspace */
.workspace {
  position: relative;
  flex: 1;
  display: flex;
  flex-direction: column;
  min-height: 0;
  background: radial-gradient(ellipse 83% 107% at 43% 0, #fff 50%, #f4f5f9 70%, #e7e8f1 86%, #e0e1ec 97%, #d9dbe8 116%);
}
.tabs { display: flex; align-self: flex-start; }
.tabs button { height: 22px; border-right: 1px solid #868686; border-bottom: 1px solid #868686; background: #303030; white-space: nowrap; }
.tabs .on { border-bottom-color: #494949; background: #494949; font-weight: 700; }
.hud { position: absolute; top: 5px; right: 79px; display: flex; gap: 6px; color: #888; }
.hud .drop { display: flex; align-items: center; gap: 7px; margin-right: 1px; }
.body { flex: 1; display: flex; min-height: 0; }
.model { flex: 1; min-width: 0; height: 100%; }

/* Left tool strip */
.strip { display: flex; flex-direction: column; align-items: center; width: 32px; background: #494949; }
.strip button { display: grid; place-items: center; width: 32px; height: 26px; }
.strip hr { width: 26px; margin: 3px 0 4px; border: 0; border-top: 1px solid #868686; }
.strip .end { width: 30px; margin: 6px auto 0 0; }
.grip { width: 26px; height: 5px; margin-bottom: 8px; border-bottom: 2px dotted #bbb; }

/* Feature tree panel */
.panel { position: relative; display: flex; flex-direction: column; width: 230px; padding-right: 2px; border-left: 1px solid #b0b0b0; border-right: 1px solid #868686; background: #494949; }
.panel-grip {
  display: grid;
  place-items: center;
  height: 20px;
  padding: 4px 3px 0 0;
  border-top: 1px solid #b8c4c4;
  border-bottom: 1px solid #868686;
  background: linear-gradient(#868686, #868686) 0 3px / 100% 1px no-repeat;
}
.dot { width: 8px; height: 8px; border: 2px solid #888; border-radius: 50%; background: #ddd; }
.panel-tabs { display: flex; height: 30px; padding-top: 4px; }
.panel-tabs button { flex: none; display: grid; place-items: center; width: 40px; border: 1px solid #868686; border-left: 0; background: #303030; }
.panel-tabs .on { width: 41px; border-bottom: 0; background: #494949; }
.panel-tabs .more { width: 26px; margin-left: auto; border: 0; background: none; }
.filter { display: flex; align-items: center; height: 26px; margin: 0 3px 1px 4px; padding-left: 2px; border: 1px solid #868686; background: #545454; }
.filter input { flex: 1; min-width: 0; height: 22px; padding: 0 4px; border: 0; outline: 0; background: none; color: inherit; font: inherit; }
.root { display: flex; align-items: center; gap: 3px; height: 22px; padding-left: 3px; overflow: hidden; white-space: nowrap; }
.tree { margin: 0; padding: 0 0 0 8px; list-style: none; }
.tree li { display: flex; align-items: center; gap: 5px; height: 22px; white-space: nowrap; }
.tree .child { padding-left: 22px; }
.tw { width: 5px; height: 8px; margin-right: 8px; background: #f0f0f0; clip-path: polygon(0 0, 100% 50%, 0 100%); }
.tw.open { width: 8px; height: 5px; margin-right: 5px; clip-path: polygon(0 0, 100% 0, 50% 100%); }
.tw.none { visibility: hidden; }
.rollback { height: 3px; background: #358ec5; }
.handle { position: absolute; right: -9px; bottom: 9px; display: grid; place-items: center; width: 9px; height: 39px; border: 1px solid #868686; border-left: 0; background: #494949; }
```
